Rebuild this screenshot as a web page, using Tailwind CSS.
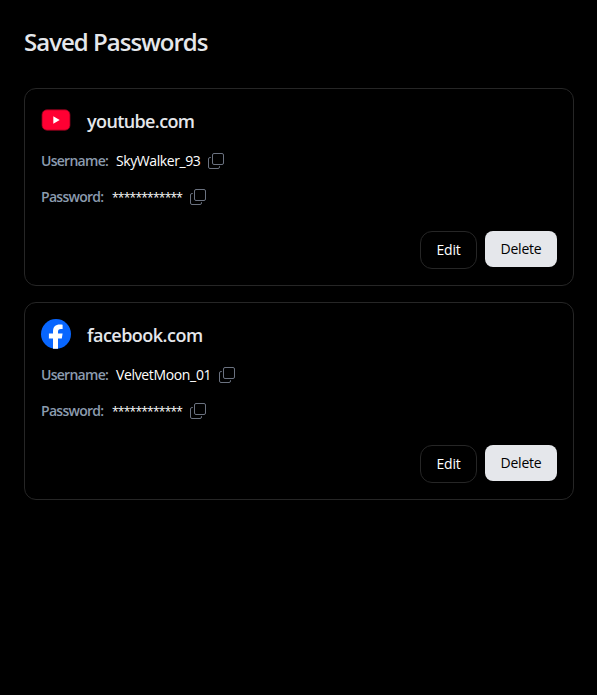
<!DOCTYPE html>
<html lang="en">
<head>
<meta charset="utf-8">
<title>Saved Passwords</title>
<script src="https://cdn.jsdelivr.net/npm/@tailwindcss/browser@4"></script>
</head>
<body class="min-h-screen bg-black p-6 font-['Segoe_UI','Open_Sans','Noto_Sans',sans-serif] text-sm text-white">
<svg class="hidden">
  <symbol id="copy" viewBox="0 0 16 16" fill="none" stroke="#6b7280">
    <rect x="4.5" y=".5" width="11" height="11" rx="1.5"/>
    <path d="M2.8 4.5H2A1.5 1.5 0 0 0 .5 6v8A1.5 1.5 0 0 0 2 15.500h8a1.500 1.500 0 0 0 1.500-1.500v-.8"/>
  </symbol>
</svg>
<h1 class="h-16 text-2xl leading-9 font-semibold tracking-[-0.98px] text-gray-200">Saved Passwords</h1>
<main class="flex w-[550px] flex-col gap-4">
  <section class="h-[198px] rounded-xl border border-[#262626] p-4">
    <div class="flex h-[30px] items-center gap-4">
      <svg class="size-[30px]" viewBox="0 0 30 30"><rect x="1" y="4.800" width="28" height="20.400" rx="5" fill="#ff0033" stroke="#8c001c" stroke-width=".8"/><path d="M12.300 11.300v7.400l6.400-3.700z" fill="#fff"/></svg>
      <h2 class="pt-px text-lg leading-7 font-semibold tracking-[-0.62px] text-gray-200">youtube.com</h2>
    </div>
    <div class="mt-4 flex h-5 items-center">
      <span class="w-[75px] font-semibold tracking-[-0.72px] whitespace-nowrap text-[#8b9bae]">Username:</span>
      <span class="w-[92px] tracking-[-0.42px] whitespace-nowrap">SkyWalker_93</span>
      <svg class="size-4"><use href="#copy"/></svg>
    </div>
    <div class="mt-4 flex h-5 items-center">
      <span class="w-[71px] font-semibold tracking-[-0.72px] whitespace-nowrap text-[#8b9bae]">Password:</span>
      <span class="w-[78px] pt-px text-xs leading-5 tracking-[-0.76px] whitespace-nowrap">************</span>
      <svg class="size-4"><use href="#copy"/></svg>
    </div>
    <div class="mt-6 flex items-start justify-end gap-2">
      <button class="h-[38px] w-[57px] rounded-xl border border-[#262626] tracking-[-0.2px]">Edit</button>
      <button class="h-9 w-[72px] rounded-lg bg-gray-200 tracking-[-0.2px] text-black">Delete</button>
    </div>
  </section>
  <section class="h-[198px] rounded-xl border border-[#262626] p-4">
    <div class="flex h-[30px] items-center gap-4">
      <svg class="size-[30px]" viewBox="0 0 30 30"><circle cx="15" cy="15" r="15" fill="#0866ff"/><path d="M12 29.700V19.500H7.900v-4.900H12v-1.800c0-5 2.300-7.300 7-7.300.9 0 2 .2 2.600.3v4.300c-.5 0-1 0-1.700 0-2.200 0-2.900.9-2.900 3v1.500h4.600l-.8 4.900H17v10.200c-1.700.2-3.400.2-5 0z" fill="#fff"/></svg>
      <h2 class="pt-px text-lg leading-7 font-semibold tracking-[-0.52px] text-gray-200">facebook.com</h2>
    </div>
    <div class="mt-4 flex h-5 items-center">
      <span class="w-[75px] font-semibold tracking-[-0.72px] whitespace-nowrap text-[#8b9bae]">Username:</span>
      <span class="w-[103px] tracking-[-0.35px] whitespace-nowrap">VelvetMoon_01</span>
      <svg class="size-4"><use href="#copy"/></svg>
    </div>
    <div class="mt-4 flex h-5 items-center">
      <span class="w-[71px] font-semibold tracking-[-0.72px] whitespace-nowrap text-[#8b9bae]">Password:</span>
      <span class="w-[78px] pt-px text-xs leading-5 tracking-[-0.76px] whitespace-nowrap">************</span>
      <svg class="size-4"><use href="#copy"/></svg>
    </div>
    <div class="mt-6 flex items-start justify-end gap-2">
      <button class="h-[38px] w-[57px] rounded-xl border border-[#262626] tracking-[-0.2px]">Edit</button>
      <button class="h-9 w-[72px] rounded-lg bg-gray-200 tracking-[-0.2px] text-black">Delete</button>
    </div>
  </section>
</main>
</body>
</html>
